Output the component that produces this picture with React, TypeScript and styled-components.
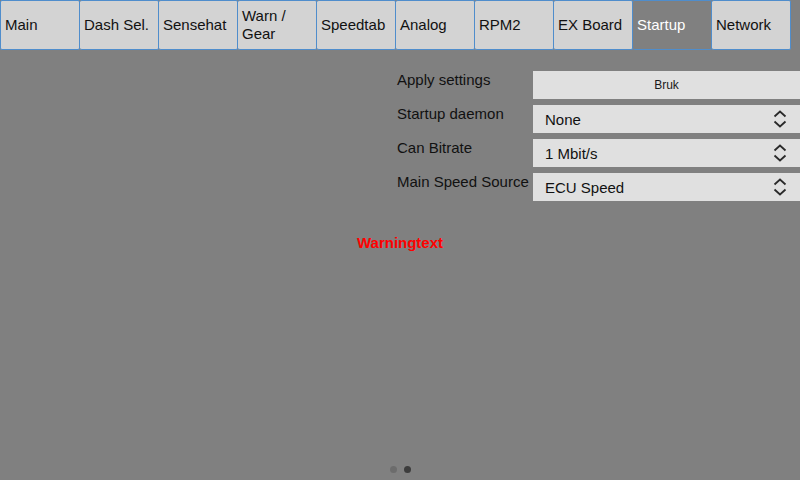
import React from "react";
import styled, { createGlobalStyle } from "styled-components";

const Global = createGlobalStyle`
  html, body { margin: 0; padding: 0; background: #808080; }
  body { font-family: "Liberation Sans", Arial, sans-serif; }
  * { box-sizing: border-box; }
`;

const Page = styled.div`
  width: 800px;
  height: 480px;
  display: flex;
  flex-direction: column;
  background: #808080;
  overflow: hidden;
`;

const TabBar = styled.div`
  display: flex;
  height: 50px;
  flex: none;
`;

const Tab = styled.div<{ $active?: boolean; $first?: boolean }>`
  width: ${(p) => (p.$first ? 80 : 79)}px;
  height: 50px;
  display: flex;
  align-items: center;
  padding-left: ${(p) => (p.$first ? 4 : 4)}px;
  border: 1px solid #4f8dcc;
  border-left: ${(p) => (p.$first ? "1px solid #4f8dcc" : "none")};
  border-radius: 2px;
  background: ${(p) => (p.$active ? "#808080" : "#d3d3d3")};
  color: ${(p) => (p.$active ? "#ffffff" : "#111111")};
  font-size: 15px;
  line-height: 18px;
`;

const Content = styled.div`
  flex: 1;
  display: flex;
  flex-direction: column;
  align-items: center;
  padding-top: 21px;
`;

const Form = styled.div`
  align-self: flex-end;
  display: grid;
  grid-template-columns: 136px 267px;
  grid-auto-rows: 28px;
  row-gap: 6px;
`;

const Label = styled.div`
  font-size: 15px;
  line-height: 17px;
  color: #111111;
  white-space: nowrap;
`;

const Button = styled.div`
  background: #e0e0e0;
  display: flex;
  align-items: center;
  justify-content: center;
  font-size: 12px;
  color: #1a1a1a;
`;

const Combo = styled.div`
  background: #e0e0e0;
  display: flex;
  align-items: center;
  justify-content: space-between;
  padding: 0 13px 0 12px;
  font-size: 15px;
  color: #111111;
`;

const Warning = styled.div`
  margin-top: 33px;
  font-size: 15px;
  line-height: 17px;
  font-weight: bold;
  color: #ff0000;
`;

const Dots = styled.div`
  margin-top: auto;
  margin-bottom: 7px;
  display: flex;
  gap: 7px;
`;

const Dot = styled.span<{ $active?: boolean }>`
  width: 7px;
  height: 7px;
  border-radius: 50%;
  background: ${(p) => (p.$active ? "#3c3c3c" : "#6c6c6c")};
`;

const Chevrons = () => (
  <svg width="14" height="20" viewBox="0 0 14 20" fill="none">
    <path d="M1.5 7.5 L7 2.5 L12.5 7.5" stroke="#2a2a2a" strokeWidth="1.8" />
    <path d="M1.5 12.5 L7 17.5 L12.5 12.5" stroke="#2a2a2a" strokeWidth="1.8" />
  </svg>
);

const tabs = [
  "Main",
  "Dash Sel.",
  "Sensehat",
  "Warn / Gear",
  "Speedtab",
  "Analog",
  "RPM2",
  "EX Board",
  "Startup",
  "Network",
];

export default function App() {
  return (
    <Page>
      <Global />
      <TabBar>
        {tabs.map((t, i) => (
          <Tab key={t} $first={i === 0} $active={t === "Startup"}>
            {t === "Warn / Gear" ? (
              <span>
                Warn /
                <br />
                Gear
              </span>
            ) : (
              t
            )}
          </Tab>
        ))}
      </TabBar>
      <Content>
        <Form>
          <Label>Apply settings</Label>
          <Button>Bruk</Button>
          <Label>Startup daemon</Label>
          <Combo>
            None
            <Chevrons />
          </Combo>
          <Label>Can Bitrate</Label>
          <Combo>
            1 Mbit/s
            <Chevrons />
          </Combo>
          <Label>Main Speed Source</Label>
          <Combo>
            ECU Speed
            <Chevrons />
          </Combo>
        </Form>
        <Warning>Warningtext</Warning>
        <Dots>
          <Dot />
          <Dot $active />
        </Dots>
      </Content>
    </Page>
  );
}
